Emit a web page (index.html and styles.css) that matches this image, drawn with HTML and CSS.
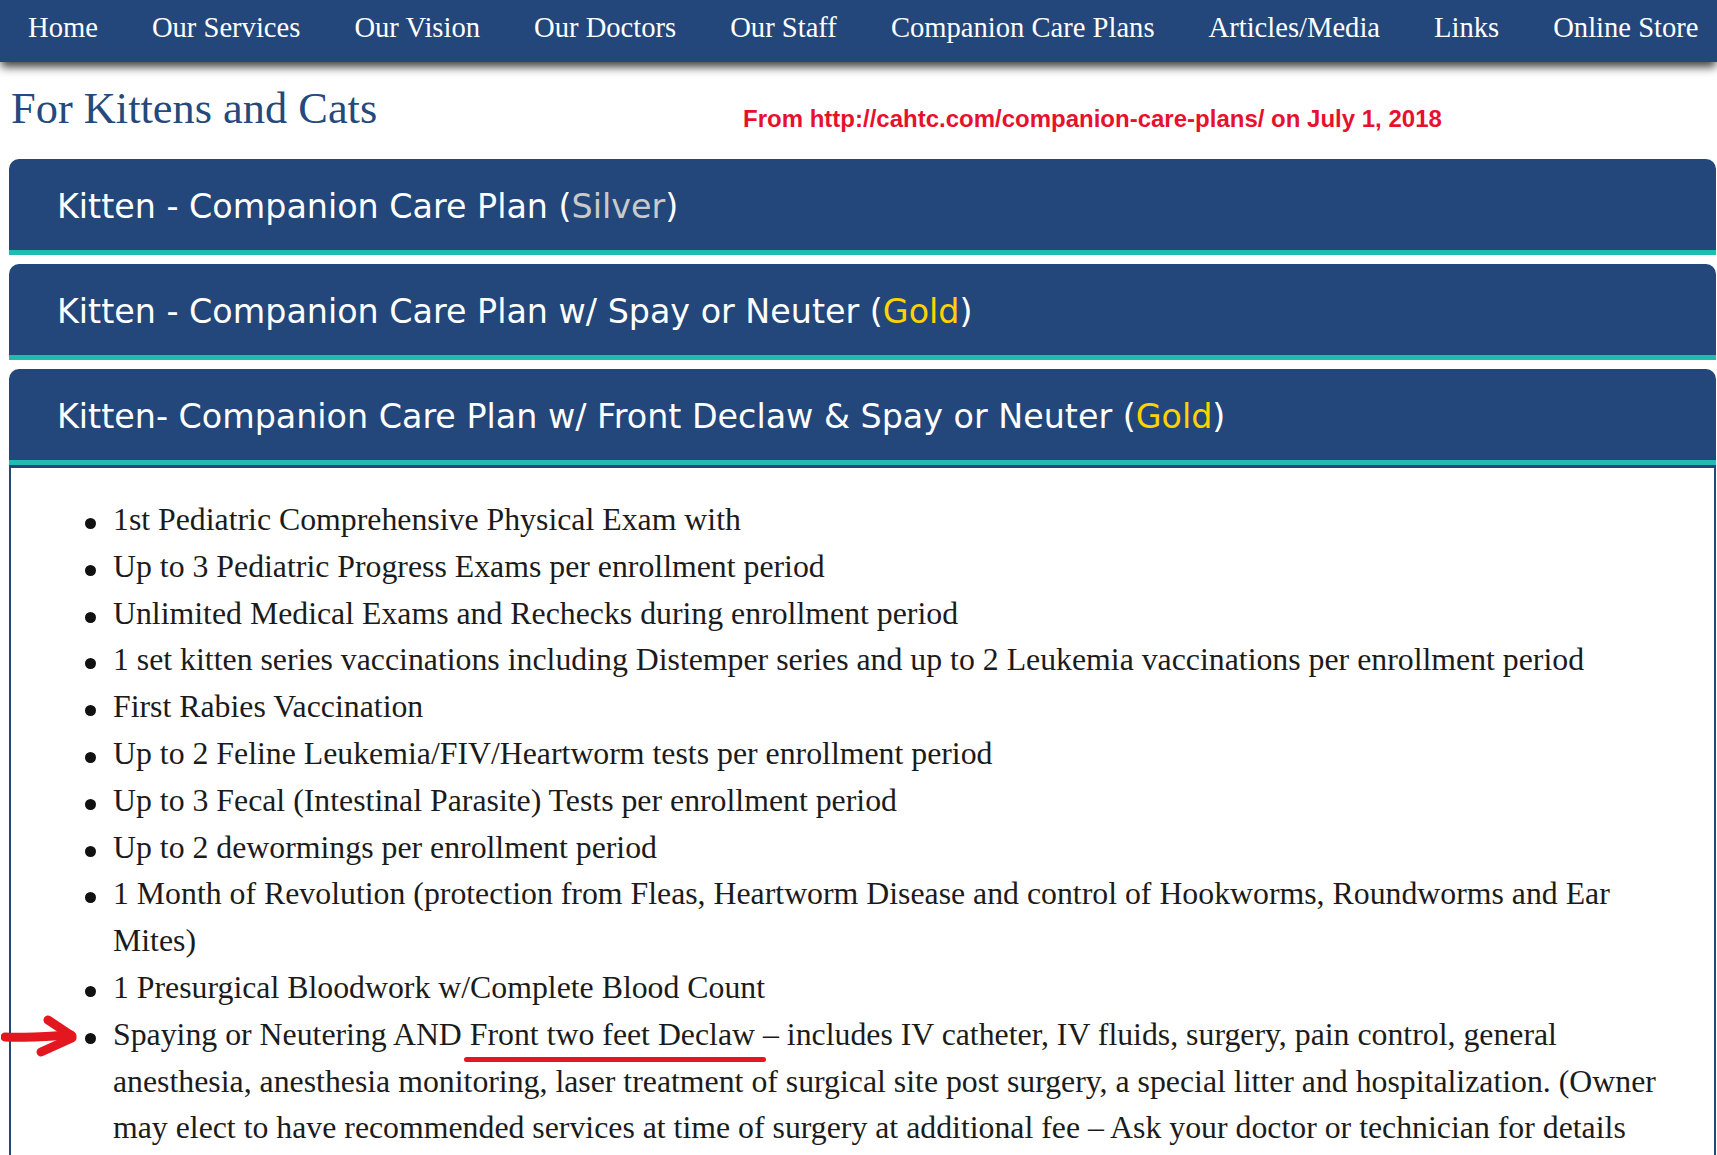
FILE: index.html
```html
<!DOCTYPE html>
<html lang="en">
<head>
    <meta charset="UTF-8">
    <meta name="viewport" content="width=device-width, initial-scale=1.0">
    <title>Companion Care Plans - For Kittens and Cats</title>
    <link rel="stylesheet" href="styles.css">
</head>
<body>
    <nav class="topnav">
        <a href="#">Home</a>
        <a href="#">Our Services</a>
        <a href="#">Our Vision</a>
        <a href="#">Our Doctors</a>
        <a href="#">Our Staff</a>
        <a href="#">Companion Care Plans</a>
        <a href="#">Articles/Media</a>
        <a href="#">Links</a>
        <a href="#">Online Store</a>
    </nav>

    <header class="page-head">
        <h1>For Kittens and Cats</h1>
        <p class="source">From http://cahtc.com/companion-care-plans/ on July 1, 2018</p>
    </header>

    <div class="plans">
        <section class="plan">
            <h2 class="plan-title">Kitten - Companion Care Plan (<span class="silver">Silver</span>)</h2>
        </section>

        <section class="plan">
            <h2 class="plan-title">Kitten - Companion Care Plan w/ Spay or Neuter (<span class="gold">Gold</span>)</h2>
        </section>

        <section class="plan">
            <h2 class="plan-title">Kitten- Companion Care Plan w/ Front Declaw &amp; Spay or Neuter (<span class="gold">Gold</span>)</h2>
            <div class="plan-body">
                <ul class="features">
                    <li>1st Pediatric Comprehensive Physical Exam with</li>
                    <li>Up to 3 Pediatric Progress Exams per enrollment period</li>
                    <li>Unlimited Medical Exams and Rechecks during enrollment period</li>
                    <li>1 set kitten series vaccinations including Distemper series and up to 2 Leukemia vaccinations per enrollment period</li>
                    <li>First Rabies Vaccination</li>
                    <li>Up to 2 Feline Leukemia/FIV/Heartworm tests per enrollment period</li>
                    <li>Up to 3 Fecal (Intestinal Parasite) Tests per enrollment period</li>
                    <li>Up to 2 dewormings per enrollment period</li>
                    <li>1 Month of Revolution (protection from Fleas, Heartworm Disease and control of Hookworms, Roundworms and Ear Mites)</li>
                    <li>1 Presurgical Bloodwork w/Complete Blood Count</li>
                    <li class="flagged">
                        <!-- red arrow drawn on the capture -->
                        <svg class="arrow" width="78" height="48" viewBox="0 0 78 48">
                            <path d="M4 27 C 25 28, 50 26, 70 25" />
                            <path d="M47 10 L 71 26" />
                            <path d="M40 42 L 71 28" />
                        </svg>
                        Spaying or Neutering AND <span class="mark">Front two feet Declaw</span> &ndash; includes IV catheter, IV fluids, surgery, pain control, general anesthesia, anesthesia monitoring, laser treatment of surgical site post surgery, a special litter and hospitalization. (Owner may elect to have recommended services at time of surgery at additional fee &ndash; Ask your doctor or technician for details
                    </li>
                </ul>
            </div>
        </section>
    </div>
</body>
</html>
```

FILE: styles.css
```css
body {
    margin: 0;
    background: #fff;
    font-family: "Liberation Serif", "Times New Roman", serif;
}

/* top navigation */
.topnav {
    display: flex;
    height: 62px;
    padding-left: 1px;
    overflow: hidden;
    background-color: #23477a;
    box-shadow: 0 6px 9px -1px rgba(0, 0, 0, 0.75);
}
.topnav a {
    flex-shrink: 0;
    padding: 0 27px;
    line-height: 55px;
    font-size: 28.6px;
    white-space: nowrap;
    color: #fff;
    text-decoration: none;
}

/* page heading */
.page-head {
    display: grid;
    grid-template-columns: 732px auto;
    align-items: start;
    margin-top: 20px;
    padding: 0 11px;
}
.page-head h1 {
    margin: 0;
    font-size: 44.4px;
    font-weight: normal;
    line-height: 53px;
    color: #24497c;
}
.source {
    margin: 0;
    padding-top: 23px;
    font-family: "Liberation Sans", Arial, sans-serif;
    font-weight: bold;
    font-size: 24px;
    line-height: 28px;
    color: #e8112d;
}

/* plan accordion */
.plans {
    margin: 24px 1px 0 9px;
}
.plan {
    margin-bottom: 9px;
}
.plan-title {
    margin: 0;
    height: 87px;
    padding: 4px 0 0 48px;
    border-radius: 10px 10px 0 0;
    border-bottom: 5px solid #22bbaf;
    background-color: #23477a;
    font-family: "DejaVu Sans", Verdana, sans-serif;
    font-size: 33.35px;
    font-weight: normal;
    line-height: 87px;
    color: #fff;
}
.silver {
    color: #cacaca;
}
.gold {
    color: #ffd200;
}

.plan-body {
    border: 2px solid #23477a;
    border-top-width: 3px;
    padding: 29px 25px 40px 30px;
}
.features {
    list-style: none;
    margin: 0;
    padding-left: 72px;
    font-size: 31.8px;
    line-height: 46.8px;
    color: #1b1b1b;
}
.features li {
    position: relative;
}
.features li::before {
    content: "";
    position: absolute;
    left: -28px;
    top: 21px;
    width: 11px;
    height: 11px;
    border-radius: 50%;
    background: #111;
}

/* red marks added on the screenshot */
.mark {
    position: relative;
}
.mark::after {
    content: "";
    position: absolute;
    left: -6px;
    right: -11px;
    top: 40px;
    height: 5px;
    border-radius: 3px;
    background: #e3171f;
}
.arrow {
    position: absolute;
    left: -112px;
    top: -2px;
}
.arrow path {
    fill: none;
    stroke: #e3171f;
    stroke-width: 9;
    stroke-linecap: round;
}
```
